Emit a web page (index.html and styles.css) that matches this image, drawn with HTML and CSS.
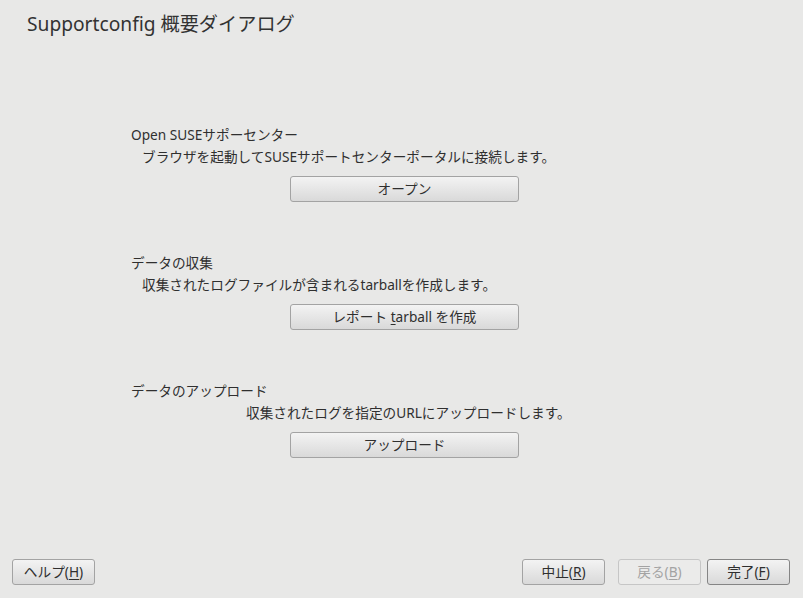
FILE: index.html
```html
<!DOCTYPE html>
<html lang="ja">
<head>
<meta charset="utf-8">
<title>Supportconfig 概要ダイアログ</title>
<link rel="stylesheet" href="styles.css">
</head>
<body>
<div class="dialog">
  <h1 class="title">Supportconfig 概要ダイアログ</h1>
  <div class="content">
    <section class="group">
      <div class="heading">Open SUSEサポーセンター</div>
      <div class="desc">ブラウザを起動してSUSEサポートセンターポータルに接続します。</div>
      <div class="action"><button class="btn wide">オープン</button></div>
    </section>
    <section class="group">
      <div class="heading">データの収集</div>
      <div class="desc">収集されたログファイルが含まれるtarballを作成します。</div>
      <div class="action"><button class="btn wide">レポート <u>t</u>arball を作成</button></div>
    </section>
    <section class="group">
      <div class="heading">データのアップロード</div>
      <div class="desc desc-far">収集されたログを指定のURLにアップロードします。</div>
      <div class="action"><button class="btn wide">アップロード</button></div>
    </section>
  </div>
  <div class="footer">
    <button class="btn small">ヘルプ(<u>H</u>)</button>
    <div class="footer-right">
      <button class="btn small">中止(<u>R</u>)</button>
      <button class="btn small disabled">戻る(<u>B</u>)</button>
      <button class="btn small default">完了(<u>F</u>)</button>
    </div>
  </div>
</div>
</body>
</html>
```
FILE: styles.css
```css
html, body {
  margin: 0;
  padding: 0;
  height: 100%;
}
body {
  background: #e8e8e7;
  color: #2f2f2f;
  font-family: "Noto Sans", "Noto Sans CJK JP", sans-serif;
  font-size: 13.66px;
}
.dialog {
  height: 598px;
  display: flex;
  flex-direction: column;
}
.title {
  margin: 0;
  padding: 10px 0 0 27px;
  font-size: 19.2px;
  font-weight: normal;
  line-height: 28px;
  color: #333;
}
.content {
  flex: 1;
  padding: 86px 0 0 131px;
  display: flex;
  flex-direction: column;
  gap: 50px;
}
.group {
  display: flex;
  flex-direction: column;
}
.heading, .desc {
  line-height: 22px;
  white-space: nowrap;
}
.desc {
  padding-left: 11px;
}
.desc-far {
  padding-left: 115px;
}
.action {
  margin-top: 8px;
  padding-left: 159px;
}
.btn {
  font-family: "Noto Sans", "Noto Sans CJK JP", sans-serif;
  font-size: 13.66px;
  color: #2f2f2f;
  height: 26px;
  padding: 0;
  border: 1px solid #a3a3a3;
  border-radius: 3px;
  background: linear-gradient(#f3f3f3, #d9d9d9);
  line-height: 22px;
}
.btn u {
  text-underline-offset: 2px;
}
.wide {
  width: 229px;
}
.small {
  width: 83px;
}
.footer {
  display: flex;
  justify-content: space-between;
  padding: 0 13px 13px 12px;
}
.footer-right {
  display: flex;
  gap: 13px;
}
.footer-right .default {
  margin-left: -7px;
  border-color: #858585;
}
.disabled {
  color: #a3a3a3;
  background: #ebebea;
  border-color: #c6c6c6;
}
```
